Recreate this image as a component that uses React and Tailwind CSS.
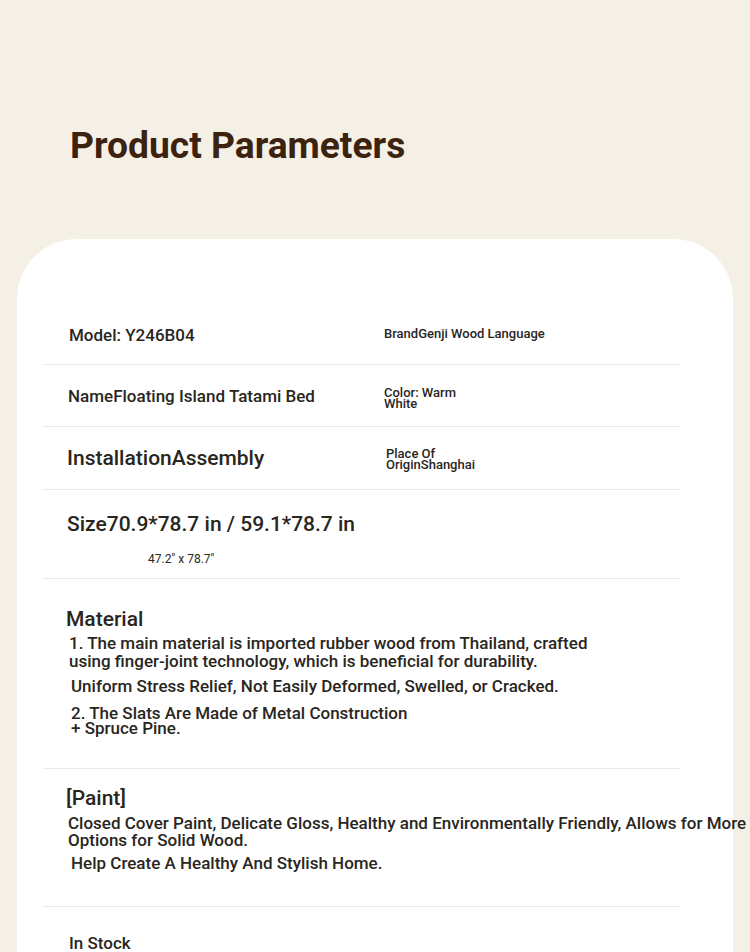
export default function App() {
  const font = { fontFamily: "Roboto, 'Noto Sans', sans-serif" };
  return (
    <div className="w-[750px] h-[952px] overflow-hidden bg-[#f5f0e6]" style={font}>
      <div className="pt-[127px] pl-[70px] h-[239px]">
        <h1 className="text-[37.2px] leading-[37px] font-bold text-[#3b230f]">Product Parameters</h1>
      </div>
      <div className="ml-[17px] w-[716px] h-[713px] bg-white rounded-t-[60px] pt-[67px] text-[#29261d] font-medium">
        <div className="ml-[26px] w-[637px] flex flex-col">
          {/* Row 1 */}
          <div className="h-[59px] border-b border-[#ece8e0] flex items-center">
            <div className="w-[341px] pl-[26px] text-[17px] leading-[20px]">Model: Y246B04</div>
            <div className="text-[13px] leading-[13px] mb-[3px]">BrandGenji Wood Language</div>
          </div>
          {/* Row 2 */}
          <div className="h-[62px] border-b border-[#ece8e0] flex items-center">
            <div className="w-[341px] pl-[25px] text-[17px] leading-[20px]">NameFloating Island Tatami Bed</div>
            <div className="w-[92px] text-[13px] leading-[11px] mt-[4px]">Color: Warm White</div>
          </div>
          {/* Row 3 */}
          <div className="h-[63px] border-b border-[#ece8e0] flex items-center">
            <div className="w-[343px] pl-[24px] text-[21px] leading-[24px]">InstallationAssembly</div>
            <div className="w-[92px] text-[13px] leading-[11px] mt-[2px]">Place Of OriginShanghai</div>
          </div>
          {/* Row 4 */}
          <div className="h-[89px] border-b border-[#ece8e0] pt-[22px]">
            <div className="pl-[24px] text-[21px] leading-[24px]">Size70.9*78.7 in / 59.1*78.7 in</div>
            <div className="pl-[105px] mt-[16px] text-[12px] leading-[14px] font-normal">47.2" x 78.7"</div>
          </div>
          {/* Row 5 */}
          <div className="h-[190px] border-b border-[#ece8e0] pt-[28px]">
            <div className="pl-[23px] text-[21px] leading-[24px]">Material</div>
            <div className="pl-[26px] mt-[3px] w-[565px] text-[17px] leading-[18px]">
              1. The main material is imported rubber wood from Thailand, crafted using finger-joint technology, which is beneficial for durability.
            </div>
            <div className="pl-[28px] mt-[7px] text-[17px] leading-[18px]">
              Uniform Stress Relief, Not Easily Deformed, Swelled, or Cracked.
            </div>
            <div className="pl-[28px] mt-[11px] w-[370px] text-[17px] leading-[15px]">
              2. The Slats Are Made of Metal Construction + Spruce Pine.
            </div>
          </div>
          {/* Row 6 */}
          <div className="h-[138px] border-b border-[#ece8e0] pt-[17px]">
            <div className="pl-[23px] text-[21px] leading-[24px]">[Paint]</div>
            <div className="pl-[25px] mt-[5px] w-[725px] text-[17px] leading-[17px]">
              Closed Cover Paint, Delicate Gloss, Healthy and Environmentally Friendly, Allows for More Options for Solid Wood.
            </div>
            <div className="pl-[28px] mt-[6px] text-[17px] leading-[17px]">
              Help Create A Healthy And Stylish Home.
            </div>
          </div>
          {/* Row 7 */}
          <div className="pt-[26px]">
            <div className="pl-[26px] text-[17px] leading-[20px]">In Stock</div>
          </div>
        </div>
      </div>
    </div>
  );
}
